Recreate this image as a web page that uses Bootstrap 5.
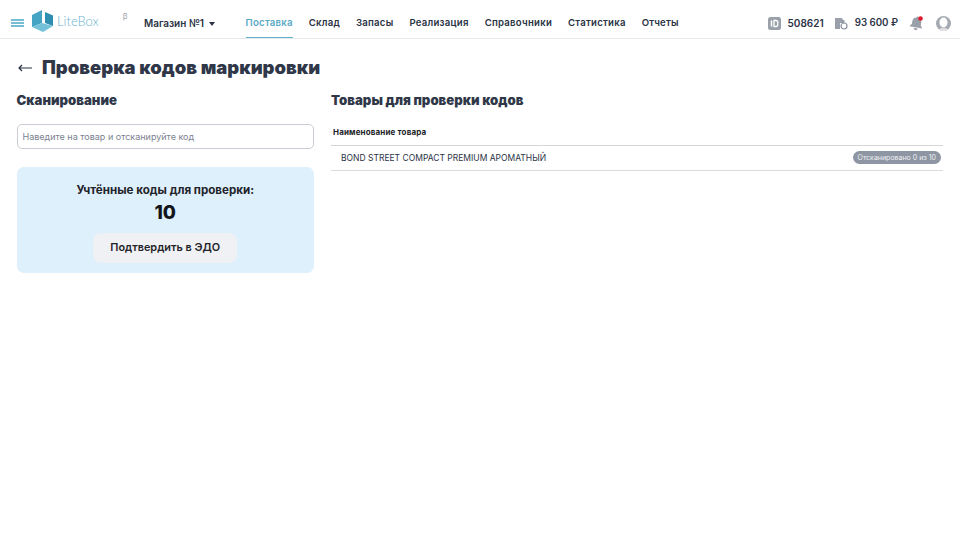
<!DOCTYPE html>
<html lang="ru">
<head>
<meta charset="utf-8">
<title>Проверка кодов маркировки</title>
<link href="https://cdn.jsdelivr.net/npm/bootstrap@5.3.0/dist/css/bootstrap.min.css" rel="stylesheet">
<style>
html,body{height:100%}
body{font-family:Inter,"Liberation Sans",sans-serif;color:#2b3345;background:#fff;overflow:hidden}
.topbar{height:39px;border-bottom:1px solid #e6e8ec;padding:8px 9px 0 11px}
.burger{width:13px;height:8px;display:block}
.logo-mark{width:22px;height:22px;margin-left:8px;margin-top:-4px;display:block}
.logo-word{font-family:Lato,sans-serif;font-weight:300;font-size:13px;color:#6db3cf;margin-left:3px;line-height:1;margin-top:-3px}
.beta{font-size:8px;color:#9aa0aa;margin-left:24px;align-self:flex-start;margin-top:4px;line-height:1}
.shop{font-size:10px;font-weight:600;color:#2b3345;margin-left:16.500px;white-space:nowrap}
.shop-caret{display:inline-block;width:0;height:0;border-left:3px solid transparent;border-right:3px solid transparent;border-top:4px solid #2b3345;margin-left:5px;vertical-align:1px}
.menu{margin-left:30.500px;gap:16px;height:30px}
.menu a{font-size:9.600px;font-weight:600;color:#2b3345;text-decoration:none;letter-spacing:.24px;height:30px;line-height:30px;white-space:nowrap;display:block}
.menu a.active{color:#5aa9c4;border-bottom:1px solid #5fb2c9}
.stat{font-size:10px;font-weight:600;color:#2b3345;white-space:nowrap}
.stat-id{margin-left:7px}
.stat-cash{margin-left:7px;font-size:9.700px}
.ico{display:block;flex:none}
.ico-cash{margin-left:10px}
.ico-bell{margin-left:11px}
.ico-user{margin-left:12px}
.page{padding:0 17px 0 16.500px}
.page-head{height:55px;padding:2px 0 0 1.500px}
.back{width:14px;height:8px;margin-right:10px;display:block}
.page-title{font-size:18.450px;font-weight:900;color:#2f3748;margin:0;line-height:1}
.col-scan{width:297.500px;flex:none}
.col-goods{flex:1;min-width:0}
.cols{gap:17px}
.sec-title{font-size:13.200px;font-weight:900;color:#2f3748;margin:0;line-height:1;height:25px}
.sec-title-scan{height:30px}
.scan-input{height:25px;border:1px solid #c9ccd2;border-radius:5px;font-size:9px;padding:0 5px;color:#2b3345;box-shadow:none}
.scan-input::placeholder{color:#7b8190;opacity:1}
.info-box{background:#dff0fd;border-radius:7px;height:106px;margin-top:18px;padding-top:18px}
.info-label{font-size:11.600px;font-weight:700;color:#23242a;line-height:1}
.info-num{font-size:19px;font-weight:800;color:#14161c;line-height:1;margin-top:6px}
.confirm{background:#f0f1f4;border:0;border-radius:8px;font-size:10.900px;font-weight:600;color:#23242a;height:30px;width:144px;padding:0;margin-top:11px;line-height:1}
.goods-table{margin:0;font-size:8.500px;border-color:#d9dbdf}
.goods-table th{font-size:8px;font-weight:700;color:#23242a;padding:0 2px;height:26px;vertical-align:middle;border-bottom:1px solid #d4d6da;letter-spacing:.15px}
.goods-table td{padding:0 2px 0 10px;height:25px;vertical-align:middle;border-bottom:1px solid #d9dbdf;color:#2b3345}
.prod-name{padding-top:1px}
.count-pill{background:#8f96a3;color:#eef0f3;font-size:7px;font-weight:400;border-radius:7px;padding:0 5px;height:13px;line-height:13px;display:inline-block;white-space:nowrap}
</style>
</head>
<body>
<nav class="topbar d-flex align-items-center">
  <svg class="burger" viewBox="0 0 13 8"><path d="M0 1h13M0 4h13M0 7h13" stroke="#4aa7c4" stroke-width="1.500"/></svg>
  <svg class="logo-mark" viewBox="0 0 22 22"><path d="M0 5 10 0v13L0 17Z" fill="#45a3c4"/><path d="M0 17l10-4 11 3-10 6Z" fill="#74c2da"/><path d="M13 2l8 3.500V16l-8-3Z" fill="#2f8fb0"/></svg>
  <span class="logo-word">LiteBox</span>
  <span class="beta">β</span>
  <span class="shop">Магазин №1<span class="shop-caret"></span></span>
  <div class="menu d-flex">
    <a class="active" href="#">Поставка</a>
    <a href="#">Склад</a>
    <a href="#">Запасы</a>
    <a href="#">Реализация</a>
    <a href="#">Справочники</a>
    <a href="#">Статистика</a>
    <a href="#">Отчеты</a>
  </div>
  <div class="d-flex align-items-center ms-auto">
    <svg class="ico" width="13" height="13" viewBox="0 0 13 13"><rect width="13" height="13" rx="2.500" fill="#9aa0aa"/><path d="M3.500 3.500v6" stroke="#fff" stroke-width="1.500"/><path d="M6 3.500h1.800a2 2 0 0 1 2 2v2a2 2 0 0 1-2 2H6Z" fill="none" stroke="#fff" stroke-width="1.300"/></svg>
    <span class="stat stat-id">508621</span>
    <svg class="ico ico-cash" width="14" height="13" viewBox="0 0 14 13"><path d="M1 1h7l1 2h1.500v3H1Zm0 5h5v6H1Z" fill="#9aa0aa"/><circle cx="10" cy="9" r="3" fill="#fff" stroke="#8a909b" stroke-width="1.200"/></svg>
    <span class="stat stat-cash">93 600 ₽</span>
    <svg class="ico ico-bell" width="15" height="15" viewBox="0 0 15 15"><g transform="rotate(10 7.500 7.500)"><path d="M6.500 1.500a1 1 0 0 1 2 0 4.500 4.500 0 0 1 3.500 4.500v2.500l2 3H1l2-3V6a4.500 4.500 0 0 1 3.500-4.500Z" fill="#9aa0aa"/><path d="M5.500 12.200h4a2 2 0 0 1-4 0Z" fill="#9aa0aa"/></g><circle cx="11.500" cy="2.500" r="2.300" fill="#e0182d"/></svg>
    <svg class="ico ico-user" width="15" height="15" viewBox="0 0 15 15"><circle cx="7.500" cy="7.500" r="7.500" fill="#a5aab2"/><ellipse cx="7.500" cy="6.500" rx="4" ry="5" fill="#fff"/><path d="M3.200 13.500c1-2.500 7.600-2.500 8.600 0a7 7 0 0 1-8.600 0Z" fill="#fff" opacity=".6"/></svg>
  </div>
</nav>
<main class="page">
  <div class="page-head d-flex align-items-center">
    <svg class="back" viewBox="0 0 14 8"><path d="M1 4h13M4 1 1 4l3 3" fill="none" stroke="#2b3345" stroke-width="1.200"/></svg>
    <h1 class="page-title">Проверка кодов маркировки</h1>
  </div>
  <div class="d-flex cols">
    <section class="col-scan">
      <h2 class="sec-title sec-title-scan">Сканирование</h2>
      <input class="form-control scan-input" type="text" placeholder="Наведите на товар и отсканируйте код">
      <div class="info-box text-center">
        <div class="info-label">Учтённые коды для проверки:</div>
        <div class="info-num">10</div>
        <button class="btn confirm" type="button">Подтвердить в ЭДО</button>
      </div>
    </section>
    <section class="col-goods">
      <h2 class="sec-title">Товары для проверки кодов</h2>
      <table class="table goods-table">
        <thead><tr><th>Наименование товара</th></tr></thead>
        <tbody><tr><td><div class="d-flex justify-content-between align-items-center"><span class="prod-name">BOND STREET COMPACT PREMIUM АРОМАТНЫЙ</span><span class="count-pill">Отсканировано 0 из 10</span></div></td></tr></tbody>
      </table>
    </section>
  </div>
</main>
</body>
</html>
